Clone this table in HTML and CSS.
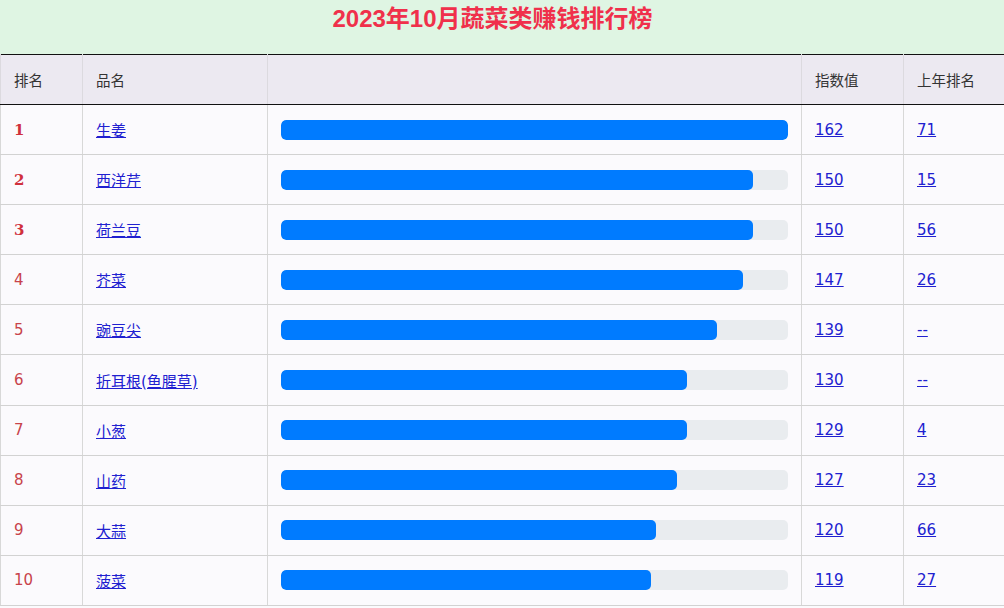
FILE: index.html
```html
<!DOCTYPE html>
<html lang="zh-CN">
<head>
<meta charset="utf-8">
<title>2023年10月蔬菜类赚钱排行榜</title>
<link rel="stylesheet" href="styles.css">
</head>
<body>
<div class="title-bar"><h1 class="title">2023年10月蔬菜类赚钱排行榜</h1></div>
<table class="rank-table">
<colgroup>
<col class="c-rank"><col class="c-name"><col class="c-bar"><col class="c-idx"><col class="c-last">
</colgroup>
<thead>
<tr><th>排名</th><th>品名</th><th></th><th>指数值</th><th>上年排名</th></tr>
</thead>
<tbody>
<tr><td class="rank top">1</td><td><a href="#">生姜</a></td><td><div class="bar"><div class="fill" style="width:100%"></div></div></td><td><a href="#" class="num">162</a></td><td><a href="#" class="num">71</a></td></tr>
<tr><td class="rank top">2</td><td><a href="#">西洋芹</a></td><td><div class="bar"><div class="fill" style="width:93.1%"></div></div></td><td><a href="#" class="num">150</a></td><td><a href="#" class="num">15</a></td></tr>
<tr><td class="rank top">3</td><td><a href="#">荷兰豆</a></td><td><div class="bar"><div class="fill" style="width:93.1%"></div></div></td><td><a href="#" class="num">150</a></td><td><a href="#" class="num">56</a></td></tr>
<tr><td class="rank">4</td><td><a href="#">芥菜</a></td><td><div class="bar"><div class="fill" style="width:91.1%"></div></div></td><td><a href="#" class="num">147</a></td><td><a href="#" class="num">26</a></td></tr>
<tr><td class="rank">5</td><td><a href="#">豌豆尖</a></td><td><div class="bar"><div class="fill" style="width:86%"></div></div></td><td><a href="#" class="num">139</a></td><td><a href="#" class="num">--</a></td></tr>
<tr><td class="rank">6</td><td><a href="#">折耳根(鱼腥草)</a></td><td><div class="bar"><div class="fill" style="width:80.1%"></div></div></td><td><a href="#" class="num">130</a></td><td><a href="#" class="num">--</a></td></tr>
<tr><td class="rank">7</td><td><a href="#">小葱</a></td><td><div class="bar"><div class="fill" style="width:80.1%"></div></div></td><td><a href="#" class="num">129</a></td><td><a href="#" class="num">4</a></td></tr>
<tr><td class="rank">8</td><td><a href="#">山药</a></td><td><div class="bar"><div class="fill" style="width:78.1%"></div></div></td><td><a href="#" class="num">127</a></td><td><a href="#" class="num">23</a></td></tr>
<tr><td class="rank">9</td><td><a href="#">大蒜</a></td><td><div class="bar"><div class="fill" style="width:73.9%"></div></div></td><td><a href="#" class="num">120</a></td><td><a href="#" class="num">66</a></td></tr>
<tr><td class="rank">10</td><td><a href="#">菠菜</a></td><td><div class="bar"><div class="fill" style="width:73%"></div></div></td><td><a href="#" class="num">119</a></td><td><a href="#" class="num">27</a></td></tr>
</tbody>
</table>
</body>
</html>
```
FILE: styles.css
```css
html, body {
  margin: 0;
  padding: 0;
}
body {
  background: #fbfafd;
  font-family: "DejaVu Sans", "Noto Sans CJK SC", sans-serif;
  font-size: 15px;
  color: #333;
}
.title-bar {
  background: #dff5e3;
  height: 54px;
  box-sizing: border-box;
  padding: 3px 19px 0 0;
  text-align: center;
}
.title {
  margin: 0;
  font-family: "Liberation Sans", "Noto Sans CJK SC", sans-serif;
  font-size: 24px;
  line-height: 32px;
  font-weight: 700;
  color: #f0304b;
}
.rank-table {
  width: 1004px;
  border-collapse: collapse;
  table-layout: fixed;
  border-top: 1px solid #111;
}
.c-rank { width: 82px; }
.c-name { width: 185px; }
.c-bar { width: 534px; }
.c-idx { width: 102px; }
.c-last { width: 101px; }
.rank-table th {
  background: #ece9f1;
  font-weight: normal;
  text-align: left;
  height: 49px;
  padding: 0 13px;
  border-left: 1px solid #dcdadf;
  border-bottom: 1px solid #111;
  color: #333;
  font-family: "Noto Sans CJK SC", sans-serif;
  font-size: 14.5px;
}
.rank-table td {
  height: 49.1px;
  padding: 0 13px;
  border-left: 1px solid #d8d8d8;
  border-bottom: 1px solid #d2d2d2;
  vertical-align: middle;
}
.rank {
  color: #c8434b;
}
.rank.top {
  color: #d0303d;
  font-weight: 700;
  font-family: "DejaVu Serif", serif;
}
.rank-table a {
  color: #2020d0;
  text-decoration: underline;
}
.bar {
  height: 20px;
  background: #e9ecef;
  border-radius: 5px;
  overflow: hidden;
}
.fill {
  height: 100%;
  background: #007bff;
  border-radius: 5px;
}
```
